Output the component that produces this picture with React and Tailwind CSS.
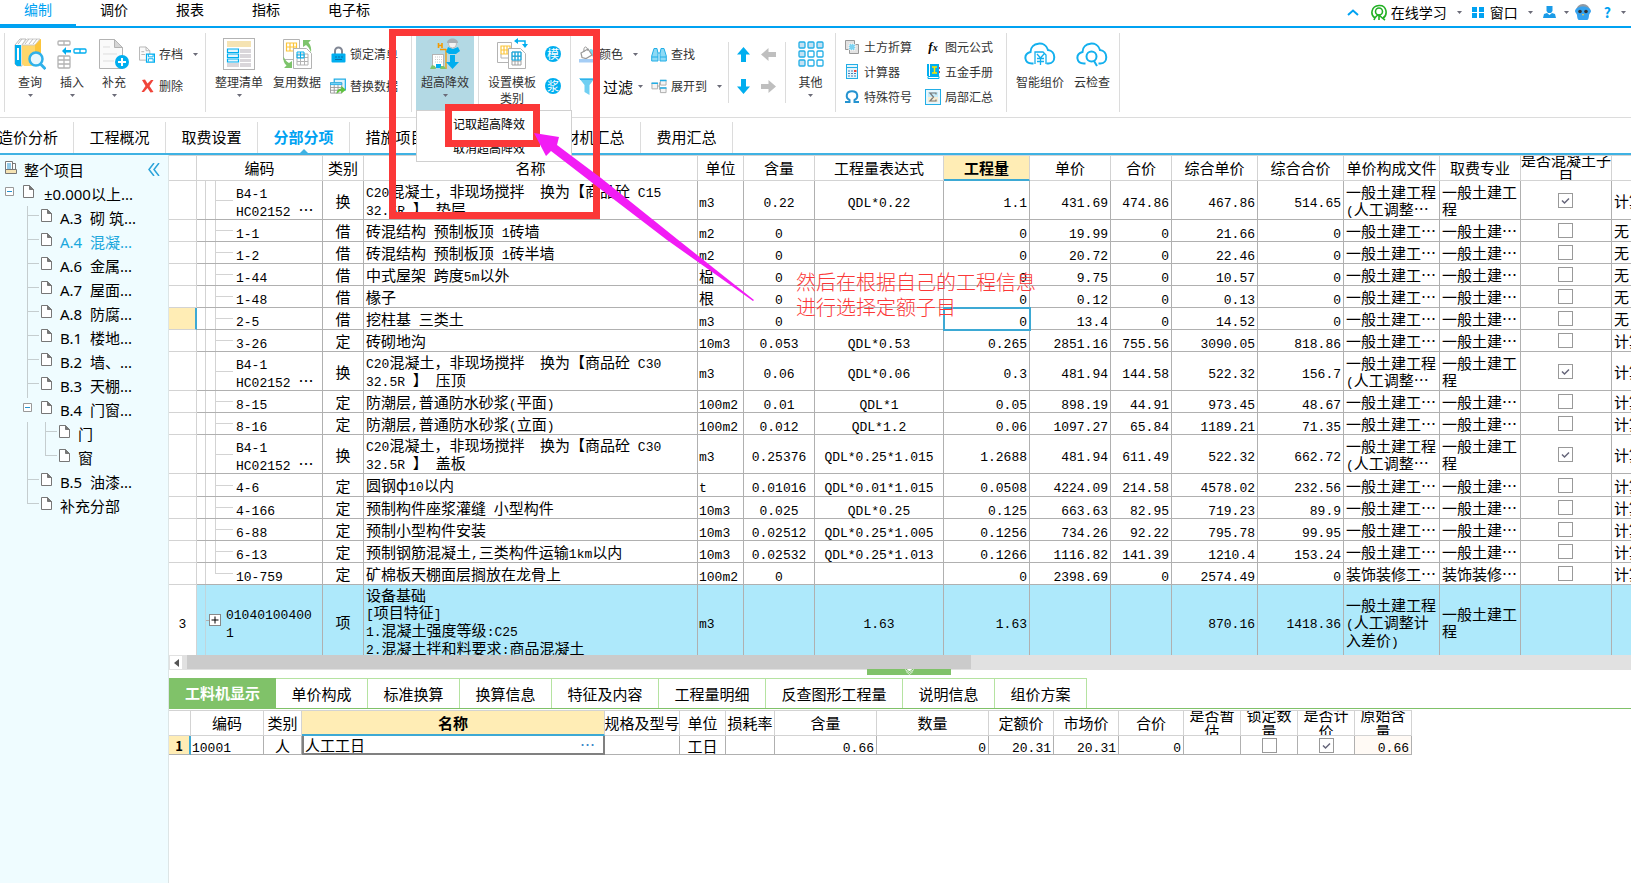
import React, { useState } from "react";

const mainMenu = ["编制", "调价", "报表", "指标", "电子标"];

const pageTabs = [
  { label: "工程概况", width: "w-[92px]" },
  { label: "取费设置", width: "w-[92px]" },
  { label: "分部分项", width: "w-[92px]" },
  { label: "措施项目", width: "w-[92px]" },
  { label: "其他项目", width: "w-[92px]" },
  { label: "人材机汇总", width: "w-[107px]" },
  { label: "费用汇总", width: "w-[92px]" },
];

const detailTabs = [
  { label: "工料机显示", width: "w-[107px]" },
  { label: "单价构成", width: "w-[92px]" },
  { label: "标准换算", width: "w-[92px]" },
  { label: "换算信息", width: "w-[92px]" },
  { label: "特征及内容", width: "w-[107px]" },
  { label: "工程量明细", width: "w-[107px]" },
  { label: "反查图形工程量", width: "w-[137px]" },
  { label: "说明信息", width: "w-[92px]" },
  { label: "组价方案", width: "w-[92px]" },
];

const sections = [
  "A.3  砌 筑...",
  "A.4  混凝...",
  "A.6  金属...",
  "A.7  屋面...",
  "A.8  防腐...",
  "B.1  楼地...",
  "B.2  墙、...",
  "B.3  天棚...",
];

const columns = [
  { label: "", width: "w-[28px]" },
  { label: "编码", width: "w-[126px]" },
  { label: "类别", width: "w-[41px]" },
  { label: "名称", width: "w-[334px]" },
  { label: "单位", width: "w-[46px]" },
  { label: "含量", width: "w-[71px]" },
  { label: "工程量表达式", width: "w-[129px]" },
  { label: "工程量", width: "w-[86px]", active: true },
  { label: "单价", width: "w-[81px]" },
  { label: "合价", width: "w-[61px]" },
  { label: "综合单价", width: "w-[86px]" },
  { label: "综合合价", width: "w-[86px]" },
  { label: "单价构成文件", width: "w-[96px]" },
  { label: "取费专业", width: "w-[81px]" },
  { label: "是否混凝土子\n目", width: "w-[91px]" },
  { label: "", width: "w-[91px]" },
];

const file1 = "一般土建工…";
const major1 = "一般土建…";
const file2 = "一般土建工程\n(人工调整…";
const major2 = "一般土建工\n程";

// code, type, name, unit, content, expression, amount, price, total, full price, full total, file, major, concrete, last
const rows = [
  ["B4-1\nHC02152 …", "换", "C20混凝土，非现场搅拌  换为【商品砼 C15\n32.5R 】 垫层", "m3", "0.22", "QDL*0.22", "1.1", "431.69", "474.86", "467.86", "514.65", file2, major2, true, "计算"],
  ["1-1", "借", "砖混结构 预制板顶 1砖墙", "m2", "0", "", "0", "19.99", "0", "21.66", "0", file1, major1, false, "无"],
  ["1-2", "借", "砖混结构 预制板顶 1砖半墙", "m2", "0", "", "0", "20.72", "0", "22.46", "0", file1, major1, false, "无"],
  ["1-44", "借", "中式屋架 跨度5m以外", "榀", "0", "", "0", "9.75", "0", "10.57", "0", file1, major1, false, "无"],
  ["1-48", "借", "椽子", "根", "0", "", "0", "0.12", "0", "0.13", "0", file1, major1, false, "无"],
  ["2-5", "借", "挖柱基 三类土", "m3", "0", "", "0", "13.4", "0", "14.52", "0", file1, major1, false, "无"],
  ["3-26", "定", "砖砌地沟", "10m3", "0.053", "QDL*0.53", "0.265", "2851.16", "755.56", "3090.05", "818.86", file1, major1, false, "计算"],
  ["B4-1\nHC02152 …", "换", "C20混凝土，非现场搅拌  换为【商品砼 C30\n32.5R 】 压顶", "m3", "0.06", "QDL*0.06", "0.3", "481.94", "144.58", "522.32", "156.7", file2, major2, true, "计算"],
  ["8-15", "定", "防潮层,普通防水砂浆(平面)", "100m2", "0.01", "QDL*1", "0.05", "898.19", "44.91", "973.45", "48.67", file1, major1, false, "计算"],
  ["8-16", "定", "防潮层,普通防水砂浆(立面)", "100m2", "0.012", "QDL*1.2", "0.06", "1097.27", "65.84", "1189.21", "71.35", file1, major1, false, "计算"],
  ["B4-1\nHC02152 …", "换", "C20混凝土，非现场搅拌  换为【商品砼 C30\n32.5R 】 盖板", "m3", "0.25376", "QDL*0.25*1.015", "1.2688", "481.94", "611.49", "522.32", "662.72", file2, major2, true, "计算"],
  ["4-6", "定", "圆钢ф10以内", "t", "0.01016", "QDL*0.01*1.015", "0.0508", "4224.09", "214.58", "4578.02", "232.56", file1, major1, false, "计算"],
  ["4-166", "定", "预制构件座浆灌缝 小型构件", "10m3", "0.025", "QDL*0.25", "0.125", "663.63", "82.95", "719.23", "89.9", file1, major1, false, "计算"],
  ["6-88", "定", "预制小型构件安装", "10m3", "0.02512", "QDL*0.25*1.005", "0.1256", "734.26", "92.22", "795.78", "99.95", file1, major1, false, "计算"],
  ["6-13", "定", "预制钢筋混凝土,三类构件运输1km以内", "10m3", "0.02532", "QDL*0.25*1.013", "0.1266", "1116.82", "141.39", "1210.4", "153.24", file1, major1, false, "计算"],
  ["10-759", "定", "矿棉板天棚面层搁放在龙骨上", "100m2", "0", "", "0", "2398.69", "0", "2574.49", "0", "装饰装修工…", "装饰装修…", false, "计算"],
];

const detailColumns = [
  { label: "", width: "w-[22px]" },
  { label: "编码", width: "w-[73px]" },
  { label: "类别", width: "w-[38px]" },
  { label: "名称", width: "w-[303px]", active: true },
  { label: "规格及型号", width: "w-[75px]" },
  { label: "单位", width: "w-[46px]" },
  { label: "损耗率", width: "w-[49px]" },
  { label: "含量", width: "w-[102px]" },
  { label: "数量", width: "w-[112px]" },
  { label: "定额价", width: "w-[65px]" },
  { label: "市场价", width: "w-[65px]" },
  { label: "合价", width: "w-[65px]" },
  { label: "是否暂\n估", width: "w-[57px]" },
  { label: "锁定数\n量", width: "w-[57px]" },
  { label: "是否计\n价", width: "w-[57px]" },
  { label: "原始含\n量", width: "w-[57px]" },
];

// Latin runs are set in the narrow mono face, everything else in the CJK face
const Mixed = ({ text }) =>
  text.split(/([\x20-\x7e]+)/).map((part, i) =>
    i % 2 ? (
      <span key={i} className="font-['Liberation_Mono',monospace] text-[13px] leading-none">
        {part}
      </span>
    ) : (
      part
    )
  );

const Caret = () => (
  <svg width="5" height="3" viewBox="0 0 5 3" className="shrink-0" fill="#6b6b78">
    <path d="M0 0h5L2.5 3z" />
  </svg>
);

const Sep = ({ short }) => (
  <div className={`w-px shrink-0 bg-[#dcdcdc] ${short ? "my-[14px]" : "my-[5px]"}`} />
);

const BigButton = ({ icon, label, width, caret }) => (
  <button className={`flex shrink-0 flex-col items-center pt-[10px] ${width}`}>
    <span className="flex h-8 items-center">{icon}</span>
    <span className="mt-1 text-xs leading-4 whitespace-pre-line">{label}</span>
    {caret && <span className="mt-1"><Caret /></span>}
  </button>
);

const SmallButton = ({ icon, label, caret }) => (
  <button className="flex h-8 items-center whitespace-nowrap">
    <span className="mr-1 flex w-4 justify-center">{icon}</span>
    <span className="text-xs">{label}</span>
    {caret && <span className="ml-[10px]"><Caret /></span>}
  </button>
);

const ToolLink = ({ icon, label }) => (
  <button className="flex h-[25px] w-[81px] items-center whitespace-nowrap">
    <span className="mr-[3px] flex w-[18px] justify-center">{icon}</span>
    <span className="text-xs">{label}</span>
  </button>
);

const Check = ({ checked, label }) => (
  <span className="relative grid size-[15px] shrink-0">
    <input
      type="checkbox"
      aria-label={label}
      defaultChecked={checked}
      className="peer size-[15px] appearance-none border border-[#999] bg-white"
    />
    <svg
      viewBox="0 0 15 15"
      className="pointer-events-none absolute inset-0 hidden peer-checked:block"
      fill="none"
      stroke="#66667a"
      strokeWidth="1.5"
    >
      <path d="M4 7.5l2.5 2.5L11 5.5" />
    </svg>
  </span>
);

/* ---- ribbon icons ---- */

const BooksIcon = () => (
  <svg width="32" height="32" viewBox="0 0 32 32">
    <path d="M1 7l5-6h6l-4 6v21H3l-2-2z" fill="#fff" stroke="#bbb" />
    <path d="M1 7h6v21H3l-2-2z" fill="#00aeef" />
    <path d="M3 10h2v12H3z" fill="#fff" />
    <path d="M8 7l5-6h14v23l-6 4H10l-2-2z" fill="#ffd76a" />
    <path d="M8 7l5-6h13l-5 6z" fill="#fff" stroke="#ccc" />
    <path d="M11 6l4-5M15 6l4-5M19 6l4-5M4 6l4-5" stroke="#bbb" />
    <path d="M21 7l6-6v22l-6 5z" fill="#fcc53a" />
    <circle cx="22" cy="21" r="6.500" fill="#e9f7fd" stroke="#2fb1ea" strokeWidth="2.500" />
    <path d="M26.500 26l5 5" stroke="#2fb1ea" strokeWidth="3" />
  </svg>
);

const InsertIcon = () => (
  <svg width="30" height="32" viewBox="0 0 30 32" fill="none" stroke="#b3b3b3" strokeWidth="1.300">
    <rect x="1" y="3" width="12" height="4" rx="1" />
    <path d="M7 3v4" />
    <rect x="1" y="18" width="12" height="12" rx="1" />
    <path d="M1 22h12M1 26h12M7 18v12" />
    <rect x="17" y="11" width="12" height="4" rx="1" stroke="#00aeef" />
    <path d="M23 11v4" stroke="#00aeef" />
    <path d="M5 13l4-4v3h5v2.500H9V17z" fill="#00aeef" stroke="none" />
  </svg>
);

const AddPageIcon = () => (
  <svg width="32" height="32" viewBox="0 0 32 32" fill="none">
    <path d="M1.500 1.500h15l8 8v21h-23z" fill="#fafafa" stroke="#b3b3b3" />
    <path d="M16.500 1.500v8h8z" fill="#d6d6d6" stroke="#b3b3b3" />
    <path d="M5 9h7M5 16h14M5 23h11" stroke="#ddd" />
    <circle cx="24" cy="24" r="7" fill="#00aeef" />
    <path d="M24 20v8M20 24h8" stroke="#fff" strokeWidth="2" />
  </svg>
);

const ArchiveIcon = () => (
  <svg width="17" height="17" viewBox="0 0 17 17" fill="none">
    <path d="M.5.500h7l4 4v10H.5z" fill="#fafafa" stroke="#b3b3b3" />
    <path d="M7.500.500v4h4M2.500 5.500h3M2.500 8.500h4" stroke="#b3b3b3" />
    <path d="M8 8h8.500v8.500H8z" fill="#fff" stroke="#00aeef" strokeWidth="1.300" />
    <path d="M10 8v3h5V8M10 16v-3h5v3" stroke="#00aeef" />
  </svg>
);

const DeleteIcon = () => (
  <svg width="13" height="14" viewBox="0 0 13 14">
    <path d="M1 1l3-.5 2.500 4L10 1h2.500L8.500 7l4 6-3 .5-3-4.500L3 13H.5l4-6z" fill="#f0453a" />
  </svg>
);

const ArrangeIcon = () => (
  <svg width="32" height="32" viewBox="0 0 32 32" fill="none">
    <rect x=".5" y=".5" width="31" height="31" fill="#fff" stroke="#b3b3b3" />
    <path d="M4 3h24v6H4z" fill="#f5e3b3" />
    <path d="M17 11h11v4H17zM17 16h11v4H17zM17 21h11v3H17zM17 25h11v4H17zM4 25h12v4H4z" fill="#d9d6da" />
    <path d="M4.500 11h11v3.500h-11zM4.500 16h11v3.500h-11zM4.500 21h11v3h-11z" fill="#e6f6fd" stroke="#00aeef" strokeWidth="1.200" />
  </svg>
);

const ReuseIcon = () => (
  <svg width="32" height="32" viewBox="0 0 32 32" fill="none">
    <path d="M2.500 1.500h16v20h-16z" fill="#fff" stroke="#b3b3b3" />
    <path d="M5.500 5h10v8h-10zM5.500 9h10M9 5v8M12.500 5v8" stroke="#fcc53a" strokeWidth="1.200" />
    <path d="M12.500 10.500h13l5 5v15h-18z" fill="#fff" stroke="#b3b3b3" />
    <path d="M16 16h11v11H16zM16 19.500h11M16 23.500h11M19.500 16v11M23.500 16v11" stroke="#b3b3b3" />
    <path d="M16 14h7v6h-7zM19.500 14v6M16 17h7" stroke="#00aeef" />
    <path d="M22 2h8l-2.500 2.500c2.500 3 3 6 2.500 10-1.500-4-2.500-5.500-5-7.500L22 9z" fill="#7ec46c" />
    <path d="M11 30H3l2.500-2.500c-2.500-2-3.500-5-3-9 1.500 3 2.500 5 5.500 6.500l3-2z" fill="#7ec46c" />
  </svg>
);

const LockIcon = () => (
  <svg width="15" height="17" viewBox="0 0 15 17" fill="none">
    <path d="M4 8V5a3.500 3.500 0 017 0v3" stroke="#808694" strokeWidth="2" />
    <rect x=".5" y="7.500" width="14" height="9" rx="1" fill="#00aeef" />
    <path d="M4 11h2M7 11h2M10 11h2M4 13.500h7" stroke="#0a6fa8" />
  </svg>
);

const ReplaceIcon = () => (
  <svg width="17" height="17" viewBox="0 0 17 17" fill="none">
    <path d="M4.500 5V.7h11.800V12h-3" fill="#dff4fd" stroke="#22aee6" strokeWidth="1.300" />
    <path d="M.5 4.500h12v11H.5z" fill="#fff" stroke="#999" />
    <path d="M.5 4.500h12v2H.5z" fill="#8ddaf5" stroke="#22aee6" />
    <path d="M.5 9.500h12M.5 12.500h12M4.500 7v8.500M8.500 7v8.500" stroke="#999" />
    <path d="M7 14.500c1-3 3-4 5-4V8l5 4-5 4v-2.500c-2 0-3 .5-5 3z" fill="#5fc23c" />
  </svg>
);

const HeightIcon = () => (
  <svg width="30" height="32" viewBox="0 0 30 32" fill="none">
    <path d="M8.500 5v5M12 5v5M8.500 7.500H12" stroke="#f59a00" strokeWidth="1.600" />
    <path d="M10 11.500h6M16 11v20" stroke="#f59a00" strokeWidth="1.300" />
    <rect x="2.500" y="16.500" width="11" height="13" fill="#fff" stroke="#b3b3b3" />
    <path d="M5 19h7M5 21.500h7M5 24h7" stroke="#ccc" strokeDasharray="1 1" />
    <path d="M6 26h5v4H6z" fill="#00aeef" />
    <path d="M0 31h6l-1-3-3-1zM10 31h6l-2-3h-3z" fill="#7ec46c" />
    <path d="M16 14l2-5 5 2 5-2 2 4-4 3h-7z" fill="#00aeef" />
    <circle cx="22.500" cy="6" r="4" fill="#f3f3f3" stroke="#bbb" />
    <path d="M17 5c0-6 11-6 11 0z" fill="#a8aeb3" />
    <path d="M20 17h5v7h4l-6.500 7-6.500-7h4z" fill="#00aeef" />
  </svg>
);

const TemplateIcon = () => (
  <svg width="32" height="32" viewBox="0 0 32 32" fill="none">
    <path d="M1.500 4.500h14v20h-14z" fill="#fff" stroke="#b3b3b3" />
    <path d="M5 8h9v8H5zM5 12h9M8 8v8M11 8v8" stroke="#fcc53a" strokeWidth="1.200" />
    <path d="M5 16v4h7" stroke="#b3b3b3" />
    <path d="M12.500 10.500h12l5 5v15h-17z" fill="#fff" stroke="#b3b3b3" />
    <path d="M16 14h9v13h-9zM16 18.500h9M16 23h9M19 14v13M22 14v13" stroke="#a0a0a0" />
    <path d="M16 14h9v8h-9zM16 18h9M19 14v8M22 14v8" stroke="#00aeef" />
    <path d="M20 3h9v5" stroke="#00aeef" strokeWidth="1.500" />
    <path d="M18 3l4-3v6zM26 6h6l-3 4z" fill="#00aeef" />
  </svg>
);

const RoundBadge = ({ children }) => (
  <button className="flex h-8 items-center justify-center">
    <span className="flex size-4 items-center justify-center rounded-full bg-[#00aeef] text-xs leading-none text-white">
      {children}
    </span>
  </button>
);

const PaintIcon = () => (
  <svg width="16" height="17" viewBox="0 0 16 17" fill="none">
    <path d="M11 3c4 0 6 4 3.500 10-1-3-1.500-5-4-6z" fill="#7fdcf2" />
    <path d="M2 7l7-4 4 6-6 3.500-4-1z" fill="#fff" stroke="#999" strokeWidth="1.200" />
    <path d="M5 6c-1-6 3-7 4-1" stroke="#999" />
    <path d="M0 13h16v3.500H0z" fill="#a5cdf5" />
  </svg>
);

const FunnelIcon = () => (
  <svg width="16" height="17" viewBox="0 0 16 17">
    <path d="M0 0h16l-5.500 7v10l-5-3V7z" fill="#70cff2" />
    <path d="M1 1.500h14" stroke="#2fb1ea" />
  </svg>
);

const BinocularsIcon = () => (
  <svg width="16" height="15" viewBox="0 0 16 15" fill="#8ddaf5" stroke="#22aee6">
    <path d="M3 1.500h3l1 5v7.500H.7V9zM13 1.500h-3l-1 5v7.500h6.300V9z" />
    <path d="M7 6h2M1 10h6M9 10h6" />
  </svg>
);

const ExpandIcon = () => (
  <svg width="17" height="15" viewBox="0 0 17 15" fill="none">
    <path d="M6 7h3M9 3v8" stroke="#aaa" />
    <path d="M1 4h6v6H1zM10 1h6v5h-6zM10 9h6v5h-6z" fill="#f4f4f4" stroke="#aaa" />
    <path d="M.5 4h7M9.500 1h7M9.500 9h7" stroke="#22aee6" strokeWidth="1.600" />
  </svg>
);

const Arrow = ({ color, turn }) => (
  <button className="flex h-8 items-center justify-center">
    <svg width="15" height="15" viewBox="0 0 15 15" fill={color} className={turn}>
      <path d="M7.500 0L14 7.500h-4V15H5V7.500H1z" />
    </svg>
  </button>
);

const GridIcon = () => (
  <svg width="26" height="26" viewBox="0 0 26 26" stroke="#22aee6" strokeWidth="1.300">
    {[1, 10, 19].map((y) =>
      [1, 10, 19].map((x) => (
        <rect key={`${x}-${y}`} x={x} y={y} width="6" height="6" rx="1" fill={x === 1 || y === 1 ? "#c5e1f2" : "#fff"} />
      ))
    )}
  </svg>
);

const EarthIcon = () => (
  <svg width="14" height="14" viewBox="0 0 14 14" fill="#e2e2e2" stroke="#999">
    <path d="M.5.500h9v9h-9zM4.500 4.500h9v9h-9z" />
    <path d="M4 4h6v6H4z" fill="#7dd3f2" stroke="#fff" strokeDasharray="1 1" />
  </svg>
);

const CalcIcon = () => (
  <svg width="12" height="15" viewBox="0 0 12 15" fill="none">
    <rect x=".5" y=".5" width="11" height="14" fill="#e6f5fc" stroke="#22aee6" />
    <path d="M1 3.500h10" stroke="#22aee6" />
    <path d="M2 7h8M2 9.500h8M2 12h8" stroke="#4a7fb5" strokeDasharray="2 1" />
    <path d="M8 6h2.500v2H8z" fill="#f0453a" />
  </svg>
);

const OmegaIcon = () => (
  <svg width="14" height="13" viewBox="0 0 14 13" fill="none" stroke="#2593d0" strokeWidth="2">
    <path d="M0 12h4.500v-2C.500 8 .5 1.200 7 1.200S13.500 8 9.500 10v2H14" />
  </svg>
);

const FxIcon = () => (
  <span className="font-['Liberation_Serif',serif] text-[13px] leading-none font-bold text-black italic">
    f<span className="text-[10px]">x</span>
  </span>
);

const BookIcon = () => (
  <svg width="13" height="15" viewBox="0 0 13 15" fill="none">
    <path d="M0 0h12v12H0z" fill="#00aeef" />
    <path d="M1 12.500h11v2H1z" fill="#fff" stroke="#00aeef" />
    <path d="M2.500 0v12" stroke="#fff" />
    <path d="M5 3h5M5 9h5M7.500 3v6" stroke="#ffe600" strokeWidth="1.500" />
    <path d="M12.500 3v2M12.500 7v2" stroke="#f0453a" />
  </svg>
);

const SumIcon = () => (
  <svg width="16" height="16" viewBox="0 0 16 16" fill="none">
    <rect x=".5" y=".5" width="15" height="15" fill="#e8f6fc" stroke="#22aee6" />
    <path d="M3 8h10v5H3z" fill="#f6ecd4" />
    <path d="M3 3h10v5H3z" fill="#c5ebf9" />
    <path d="M11 5.500V4H5l3.500 4L5 12h6v-1.500" stroke="#777" strokeWidth="1.200" />
  </svg>
);

const CloudIcon = ({ children }) => (
  <svg width="32" height="26" viewBox="0 0 32 26" fill="none" stroke="#13b0ee" strokeWidth="2">
    <path d="M9.500 22.500H8c-8 0-9-9.500-1.500-11.500C6.500 1 21.500-.5 24 9c8 1 8.500 13 .5 13.500h-2" />
    {children}
  </svg>
);

const PageIcon = () => (
  <svg width="11" height="13" viewBox="0 0 11 13" className="mb-[5px] shrink-0" fill="#fff" stroke="#777">
    <path d="M.5.500h6l4 4v8H.5z" />
    <path d="M6.500.500v4h4z" fill="#777" />
  </svg>
);

const MinusBox = () => (
  <svg width="9" height="9" viewBox="0 0 9 9" className="mb-[5px] shrink-0" fill="#fff">
    <path d="M.5.500h8v8h-8z" stroke="#999" />
    <path d="M2 4.500h5" stroke="#2593d0" />
  </svg>
);

const TitleBar = ({ active, onSelect }) => (
  <header className="flex h-7 border-b-2 border-[#00a2f2] text-sm text-black">
    <nav className="flex">
      {mainMenu.map((item) => (
        <button
          key={item}
          onClick={() => onSelect(item)}
          className={`h-7 shrink-0 px-6 leading-4 whitespace-nowrap ${
            active === item ? "border-b-4 border-[#00a2f2] pb-[6px] text-[#00a2f2]" : "pb-[10px]"
          }`}
        >
          {item}
        </button>
      ))}
    </nav>
    <div className="ml-auto flex h-6 items-center pr-[5px]">
      <svg width="12" height="7" viewBox="0 0 12 7" className="mr-3" fill="none" stroke="#00a2f2" strokeWidth="2">
        <path d="M1 6l5-4.500L11 6" />
      </svg>
      <svg width="16" height="17" viewBox="0 0 16 17" className="mr-1" fill="none" stroke="#22b024" strokeWidth="1.600">
        <path d="M4 14C-1 11 0 2 8 1.500S17 11 12 14" />
        <circle cx="8" cy="7.500" r="3.500" />
        <path d="M3 16c2-5 4-5 5-5 2 2 3 3 6 5M8 12v4" />
      </svg>
      <button className="flex items-center gap-[10px]">
        在线学习
        <Caret />
      </button>
      <svg width="12" height="11" viewBox="0 0 12 11" className="mr-[6px] ml-[10px]" fill="#00a2f2">
        <path d="M0 0h5v5H0zM7 0h5v5H7zM0 6h5v5H0zM7 6h5v5H7z" />
      </svg>
      <button className="flex items-center gap-[10px]">
        窗口
        <Caret />
      </button>
      <button aria-label="用户" className="ml-[10px] flex items-center gap-2">
        <svg width="13" height="12" viewBox="0 0 13 12" fill="#1a9be8">
          <path d="M3.500 0h6v5l-1.500 2h-3L3.500 5zM0 12l1-4 3-1 2.500 2L9 7l3 1 1 4z" />
        </svg>
        <Caret />
      </button>
      <svg width="16" height="16" viewBox="0 0 16 16" className="ml-[6px]">
        <circle cx="8" cy="7" r="7" fill="#8f9aa5" />
        <path d="M0 7c1-6 15-6 16 0 0 2-2 2-2 4 0 3-1 5-2 5H4c-1 0-2-2-2-5 0-2-2-2-2-4z" fill="#35a2ef" />
        <circle cx="5" cy="7.500" r="1.800" fill="#333" />
        <circle cx="11" cy="7.500" r="1.800" fill="#333" />
        <path d="M7 10h2l-1 2z" fill="#ffd24a" />
      </svg>
      <button aria-label="帮助" className="ml-[13px] flex items-center gap-[10px] font-bold text-[#00a2f2]">
        ?
        <Caret />
      </button>
    </div>
  </header>
);

const Ribbon = () => (
  <div className="flex h-[90px] border-b border-[#dcdcdc] pl-1 text-[#333]">
    <Sep />
    <div className="flex w-[200px] shrink-0 pl-1">
      <BigButton icon={<BooksIcon />} label="查询" width="w-[42px]" caret />
      <BigButton icon={<InsertIcon />} label="插入" width="w-[42px]" caret />
      <BigButton icon={<AddPageIcon />} label="补充" width="w-[42px]" caret />
      <div className="ml-1 pt-[10px]">
        <SmallButton icon={<ArchiveIcon />} label="存档" caret />
        <SmallButton icon={<DeleteIcon />} label="删除" />
      </div>
    </div>
    <Sep />
    <div className="flex w-[205px] shrink-0 pl-1">
      <BigButton icon={<ArrangeIcon />} label="整理清单" width="w-[58px]" caret />
      <BigButton icon={<ReuseIcon />} label="复用数据" width="w-[58px]" />
      <div className="ml-1 pt-[10px]">
        <SmallButton icon={<LockIcon />} label="锁定清单" />
        <SmallButton icon={<ReplaceIcon />} label="替换数据" />
      </div>
    </div>
    <Sep />
    <div className="relative flex w-[66px] shrink-0 justify-center">
      <div className="mt-2 h-[74px] bg-[#b3d9e4]">
        <button className="flex w-[58px] flex-col items-center pt-[2px]">
          <HeightIcon />
          <span className="mt-1 text-xs leading-4">超高降效</span>
          <span className="mt-1"><Caret /></span>
        </button>
      </div>
      <div className="absolute top-[82px] left-1 z-10 h-[52px] w-[156px] border border-[#d0d0d0] bg-white py-px text-black">
        <button className="block h-6 pl-9 text-xs whitespace-nowrap">记取超高降效</button>
        <button className="block h-6 pl-9 text-xs whitespace-nowrap">取消超高降效</button>
      </div>
    </div>
    <Sep />
    <div className="flex w-[91px] shrink-0 pl-1">
      <BigButton icon={<TemplateIcon />} label={"设置模板\n类别"} width="w-[58px]" />
      <div className="flex w-6 flex-col pt-[10px]">
        <RoundBadge>模</RoundBadge>
        <RoundBadge>浆</RoundBadge>
      </div>
    </div>
    <Sep />
    <div className="flex w-[157px] shrink-0 pt-[10px] pl-2">
      <div className="w-[72px]">
        <SmallButton icon={<PaintIcon />} label="颜色" caret />
        <button className="flex h-8 items-center whitespace-nowrap text-black">
          <FunnelIcon />
          <span className="mr-[5px] ml-2 pt-[2px] text-[15px]">过滤</span>
          <Caret />
        </button>
      </div>
      <div>
        <SmallButton icon={<BinocularsIcon />} label="查找" />
        <SmallButton icon={<ExpandIcon />} label="展开到" caret />
      </div>
    </div>
    <Sep short />
    <div className="grid w-14 shrink-0 grid-cols-2 content-start pt-[10px] pr-1 pl-[2px]">
      <Arrow color="#00aeef" turn="" />
      <Arrow color="#bfbfbf" turn="-rotate-90" />
      <Arrow color="#00aeef" turn="rotate-180" />
      <Arrow color="#bfbfbf" turn="rotate-90" />
    </div>
    <Sep short />
    <BigButton icon={<GridIcon />} label="其他" width="w-[49px]" caret />
    <Sep />
    <div className="grid w-[170px] shrink-0 grid-cols-[81px_81px] content-start pt-[6px] pl-[7px]">
      <ToolLink icon={<EarthIcon />} label="土方折算" />
      <ToolLink icon={<FxIcon />} label="图元公式" />
      <ToolLink icon={<CalcIcon />} label="计算器" />
      <ToolLink icon={<BookIcon />} label="五金手册" />
      <ToolLink icon={<OmegaIcon />} label="特殊符号" />
      <ToolLink icon={<SumIcon />} label="局部汇总" />
    </div>
    <Sep />
    <div className="flex w-[112px] shrink-0 pl-1">
      <BigButton
        icon={
          <CloudIcon>
            <path d="M11 23V11h8l3 3v9M13 13l3.500 4 3.500-4M13 17.500h7M13 20.500h7M16.500 17v7" strokeWidth="1.300" />
          </CloudIcon>
        }
        label="智能组价"
        width="w-[58px]"
      />
      <BigButton
        icon={
          <CloudIcon>
            <circle cx="15.500" cy="15.500" r="5" />
            <path d="M18 20l3 5" />
          </CloudIcon>
        }
        label="云检查"
        width="w-[46px]"
      />
    </div>
    <Sep />
  </div>
);

const PageTabs = ({ active, onSelect }) => (
  <nav className="flex h-[37px] border-b-2 border-[#3fb2e3] text-[15px] text-black">
    <button className="mt-1 flex w-[74px] shrink-0 items-center justify-end border-r border-[#dcdcdc] pr-[15px] whitespace-nowrap">
      造价分析
    </button>
    {pageTabs.map((tab) => (
      <button
        key={tab.label}
        onClick={() => onSelect(tab.label)}
        className={`relative mt-1 shrink-0 border-r border-[#dcdcdc] whitespace-nowrap ${tab.width} ${
          active === tab.label ? "font-bold text-[#00a2f2]" : ""
        }`}
      >
        {tab.label}
        {active === tab.label && (
          <svg width="8" height="4" viewBox="0 0 8 4" className="absolute bottom-0 left-1/2 -translate-x-1/2" fill="#3fb2e3">
            <path d="M0 4l4-4 4 4z" />
          </svg>
        )}
      </button>
    ))}
  </nav>
);

const Branch = ({ last }) => (
  <span className="relative w-[14px] shrink-0 self-stretch">
    <span className={`absolute top-0 left-0 w-px bg-[#c5cdcf] ${last ? "h-[9px]" : "h-full"}`} />
    <span className="absolute top-[9px] left-0 h-px w-3 bg-[#c5cdcf]" />
  </span>
);

const Sidebar = () => {
  const [current, setCurrent] = useState(sections[1]);
  return (
    <aside className="w-[169px] shrink-0 border-r border-[#dde5e6] bg-[#effcff] font-['Noto_Sans','Noto_Sans_CJK_SC',sans-serif] text-[15px] leading-6 text-black">
      <div className="flex h-[27px] items-center pt-[2px] pl-[5px]">
        <svg width="12" height="13" viewBox="0 0 12 13" className="mb-[5px]" fill="#fff" stroke="#777">
          <path d="M.5.500h7v9h-7zM7.500 2.500h3v7" />
          <path d="M.5 8.500h11v4H.5z" fill="#f5e3b3" />
          <path d="M2 3h4M2 5h4M2 7h4" stroke="#2593d0" />
        </svg>
        <span className="ml-[7px] font-['Noto_Sans_CJK_SC',sans-serif]">整个项目</span>
        <button aria-label="收起" className="ml-auto pr-2">
          <svg width="12" height="13" viewBox="0 0 12 13" fill="none" stroke="#2ba3d9" strokeWidth="1.500">
            <path d="M6 0L1 6.500 6 13M11 0L6 6.500 11 13" />
          </svg>
        </button>
      </div>
      <ul className="whitespace-pre">
        <li className="flex h-6 items-center pl-[5px]">
          <MinusBox />
          <span className="ml-[9px]"><PageIcon /></span>
          <button className="ml-[10px]">±0.000以上...</button>
        </li>
        {sections.map((name) => (
          <li key={name} className="flex h-6 items-center pl-[27px]">
            <Branch />
            <PageIcon />
            <button
              onClick={() => setCurrent(name)}
              className={`ml-2 ${current === name ? "text-[#1aa7dc]" : ""}`}
            >
              {name}
            </button>
          </li>
        ))}
        <li className="flex h-6 items-center pl-[23px]">
          <MinusBox />
          <span className="ml-[9px]"><PageIcon /></span>
          <button className="ml-2">B.4  门窗...</button>
        </li>
        {["门", "窗"].map((name) => (
          <li key={name} className="flex h-6 items-center pl-[27px]">
            <span className="w-[18px] self-stretch border-l border-[#c5cdcf]" />
            <Branch last={name === "窗"} />
            <PageIcon />
            <button className="ml-2">{name}</button>
          </li>
        ))}
        <li className="flex h-6 items-center pl-[27px]">
          <Branch />
          <PageIcon />
          <button className="ml-2">B.5  油漆...</button>
        </li>
        <li className="flex h-6 items-center pl-[27px]">
          <Branch last />
          <PageIcon />
          <button className="ml-2">补充分部</button>
        </li>
      </ul>
    </aside>
  );
};

const HeadRow = ({ cols }) => (
  <>
    <colgroup>
      {cols.map((col, i) => (
        <col key={i} className={col.width} />
      ))}
    </colgroup>
    <thead>
      <tr>
        {cols.map((col, i) => (
          <th
            key={i}
            className={`border-r p-0 ${
              col.active
                ? "border-b-2 border-r-[#d3d3d3] border-b-[#3da9d4] bg-[#ffedb5] font-bold"
                : "border-b border-[#d3d3d3] font-normal"
            }`}
          >
            <div
              className={`flex items-center justify-center overflow-hidden text-center leading-4 whitespace-pre ${
                col.active ? "h-[23px]" : "h-6"
              }`}
            >
              {col.label}
            </div>
          </th>
        ))}
      </tr>
    </thead>
  </>
);

const left = "justify-start pl-[2px]";
const leftNum = "justify-start pl-px pt-[2px]";
const right = "justify-end pr-[2px] pt-[2px]";
const center = "justify-center";
const centerNum = "justify-center pt-[2px]";

const Cell = ({ text, height, align = left, className = "" }) => (
  <td className={`border-r border-b border-[#b0b0b0] p-0 ${className}`}>
    <div className={`flex items-center overflow-hidden leading-[17px] whitespace-pre ${height} ${align}`}>
      <span>
        <Mixed text={text} />
      </span>
    </div>
  </td>
);

const QuotaRow = ({ row, last }) => {
  const [code, type, name, unit, content, expr, amount, price, total, fullPrice, fullTotal, file, major, concrete, end] = row;
  const selected = code === "2-5";
  const height = code.includes("\n") ? "h-[38px]" : code === "4-6" ? "h-[22px]" : "h-[21px]";
  return (
    <tr>
      <td
        className={`border-b border-b-[#d3d3d3] p-0 ${
          selected ? "border-r-2 border-r-[#3da9d4] bg-[#ffedb5]" : "border-r border-r-[#d3d3d3]"
        }`}
      />
      <td className="border-r border-b border-[#b0b0b0] p-0">
        <div className={`flex items-center leading-[17px] whitespace-pre ${height}`}>
          <span className="w-[9px] self-stretch border-r border-[#d3d3d3]" />
          <span className={`w-[10px] border-r border-[#d3d3d3] ${last ? "h-1/2 self-start" : "self-stretch"}`} />
          <span className="h-px w-[17px] bg-[#d3d3d3]" />
          <span className="ml-[3px] pt-[2px]">
            <Mixed text={code} />
          </span>
        </div>
      </td>
      <Cell text={type} height={height} align={center} />
      <Cell text={name} height={height} />
      <Cell text={unit} height={height} align={leftNum} />
      <Cell text={content} height={height} align={centerNum} />
      <Cell text={expr} height={height} align={centerNum} />
      <Cell
        text={amount}
        height={height}
        align={right}
        className={selected ? "outline-2 -outline-offset-1 outline-[#3da9d4]" : ""}
      />
      <Cell text={price} height={height} align={right} />
      <Cell text={total} height={height} align={right} />
      <Cell text={fullPrice} height={height} align={right} />
      <Cell text={fullTotal} height={height} align={right} />
      <Cell text={file} height={height} />
      <Cell text={major} height={height} />
      <td className="border-r border-b border-[#b0b0b0] p-0">
        <div className={`flex items-center justify-center pr-px ${height}`}>
          <Check checked={concrete} label={`${code} 是否混凝土子目`} />
        </div>
      </td>
      <Cell text={end} height={height} />
    </tr>
  );
};

const QuotaTable = () => (
  <table className="w-full table-fixed border-separate border-spacing-0 border-t border-[#d3d3d3] text-[15px] text-black">
    <HeadRow cols={columns} />
    <tbody>
      {rows.map((row, i) => (
        <QuotaRow key={i} row={row} last={i === rows.length - 1} />
      ))}
      <tr className="bg-[#aee9fb] *:border-b-0">
        <td className="border-r border-[#d3d3d3] bg-white p-0 pt-1 text-center">
          <Mixed text="3" />
        </td>
        <td className="border-r border-[#b0b0b0] p-0">
          <div className="flex h-[70px] items-center leading-[17px] whitespace-pre">
            <span className="w-[9px] self-stretch border-r border-[#c0d5dc]" />
            <span className="h-px w-[3px] bg-[#b0b0b0]" />
            <button aria-label="展开" className="size-3 border border-[#888] bg-white">
              <svg viewBox="0 0 10 10" stroke="#000">
                <path d="M5 1.500v7M1.500 5h7" />
              </svg>
            </button>
            <span className="ml-[5px] pt-1">
              <Mixed text={"01040100400\n1"} />
            </span>
          </div>
        </td>
        <Cell text="项" height="h-[70px]" align={centerNum} />
        <Cell
          text={"设备基础\n[项目特征]\n1.混凝土强度等级:C25\n2.混凝土拌和料要求:商品混凝土"}
          height="h-[70px] pt-[2px]"
        />
        <Cell text="m3" height="h-[70px]" align="pl-px pt-1" />
        <Cell text="" height="h-[70px]" />
        <Cell text="1.63" height="h-[70px]" align="justify-center pt-1" />
        <Cell text="1.63" height="h-[70px]" align="justify-end pr-[2px] pt-1" />
        <Cell text="" height="h-[70px]" />
        <Cell text="" height="h-[70px]" />
        <Cell text="870.16" height="h-[70px]" align="justify-end pr-[2px] pt-1" />
        <Cell text="1418.36" height="h-[70px]" align="justify-end pr-[2px] pt-1" />
        <Cell text={"一般土建工程\n(人工调整计\n入差价)"} height="h-[70px] pt-1" />
        <Cell text={"一般土建工\n程"} height="h-[70px] pt-1" />
        <Cell text="" height="h-[70px]" />
        <Cell text="" height="h-[70px]" />
      </tr>
    </tbody>
  </table>
);

const ScrollBar = () => (
  <div className="relative flex h-[15px] bg-[#e1e1e1]">
    <button aria-label="向左" className="my-px ml-px flex w-3 items-center justify-center bg-white">
      <svg width="5" height="8" viewBox="0 0 5 8" fill="#555">
        <path d="M5 0v8L0 4z" />
      </svg>
    </button>
    <div className="ml-[5px] h-[14px] w-[784px] bg-[#cbcbcb]" />
    <button
      aria-label="折叠"
      className="absolute top-[14px] left-[698px] flex h-[6px] w-[84px] justify-center bg-[#80c269]"
    >
      <svg width="9" height="6" viewBox="0 0 9 6" fill="none" stroke="#fff">
        <path d="M2.500 0h4l-2 2z" fill="#fff" />
        <path d="M0 .5l4.500 3L9 .5M1 2.500l3.500 3 3.500-3" strokeOpacity=".7" />
      </svg>
    </button>
  </div>
);

const DetailTable = () => (
  <table className="mt-px w-0 table-fixed border-separate border-spacing-0 border-t border-[#d3d3d3] text-[15px] text-black">
    <HeadRow cols={detailColumns} />
    <tbody>
      <tr>
        <td className="border-r-2 border-b border-r-[#3da9d4] border-b-[#b0b0b0] bg-[#ffedb5] p-0 text-center text-[13px] leading-[17px] font-bold">
          1
        </td>
        <Cell text="10001" height="h-[18px]" align={leftNum} />
        <Cell text="人" height="h-[18px]" align={center} />
        <td className="border-2 border-t-0 border-[#808080] p-0">
          <div className="flex h-[17px] items-center">
            <input
              aria-label="名称"
              defaultValue="人工工日"
              className="w-full min-w-0 pl-px leading-[17px] outline-none"
            />
            <button className="mr-2 leading-[17px] text-[#3a86c8]">…</button>
          </div>
        </td>
        <Cell text="" height="h-[18px]" />
        <Cell text="工日" height="h-[18px]" align={center} />
        <Cell text="" height="h-[18px]" />
        <Cell text="0.66" height="h-[18px]" align={right} />
        <Cell text="0" height="h-[18px]" align={right} />
        <Cell text="20.31" height="h-[18px]" align={right} />
        <Cell text="20.31" height="h-[18px]" align={right} />
        <Cell text="0" height="h-[18px]" align={right} />
        <Cell text="" height="h-[18px]" />
        <td className="border-r border-b border-[#b0b0b0] p-0">
          <div className="flex h-[18px] items-center justify-center">
            <Check checked={false} label="锁定数量" />
          </div>
        </td>
        <td className="border-r border-b border-[#b0b0b0] p-0">
          <div className="flex h-[18px] items-center justify-center">
            <Check checked label="是否计价" />
          </div>
        </td>
        <Cell text="0.66" height="h-[18px]" align={right} className="bg-[#fffaf5]" />
      </tr>
    </tbody>
  </table>
);

// hand-drawn callouts floating over the window
const Callouts = () => (
  <div className="pointer-events-none absolute inset-0 z-20 overflow-hidden">
    <div className="absolute top-[29px] left-[389px] h-[190px] w-[211px] border-[7px] border-[#fb3838]" />
    <div className="absolute top-[104px] left-[445px] h-[43px] w-[95px] border-[7px] border-[#fb3838]" />
    <svg width="230" height="180" viewBox="530 130 230 180" className="absolute top-[130px] left-[530px]" fill="#f21cf5">
      <path d="M534 133l25 4-2 8 44 33 76 61 77 61-1 1-86-61-68-52-48-37-5 5z" />
    </svg>
    <p className="absolute top-[269px] left-[796px] text-xl leading-[25px] font-light whitespace-nowrap text-[#fb3838]">
      然后在根据自己的工程信息
      <br />
      进行选择定额子目
    </p>
  </div>
);

const App = () => {
  const [menu, setMenu] = useState("编制");
  const [page, setPage] = useState("分部分项");
  const [detail, setDetail] = useState("工料机显示");

  return (
    <div
      lang="zh-CN"
      className="relative flex min-h-screen flex-col overflow-hidden bg-white font-['Noto_Sans_CJK_SC',sans-serif]"
    >
      <TitleBar active={menu} onSelect={setMenu} />
      <Ribbon />
      <PageTabs active={page} onSelect={setPage} />
      <div className="flex flex-1">
        <Sidebar />
        <main className="min-w-0 flex-1 overflow-hidden">
          <QuotaTable />
          <ScrollBar />
          <nav className="mt-2 flex h-[31px] border-b border-[#80c269] text-[15px]">
            {detailTabs.map((tab) => (
              <button
                key={tab.label}
                onClick={() => setDetail(tab.label)}
                className={`shrink-0 pt-px whitespace-nowrap ${tab.width} ${
                  detail === tab.label
                    ? "bg-[#80c269] font-bold text-white"
                    : "border-t border-r border-[#b5e3a1] text-black"
                }`}
              >
                {tab.label}
              </button>
            ))}
          </nav>
          <DetailTable />
        </main>
      </div>
      <Callouts />
    </div>
  );
};

export default App;
